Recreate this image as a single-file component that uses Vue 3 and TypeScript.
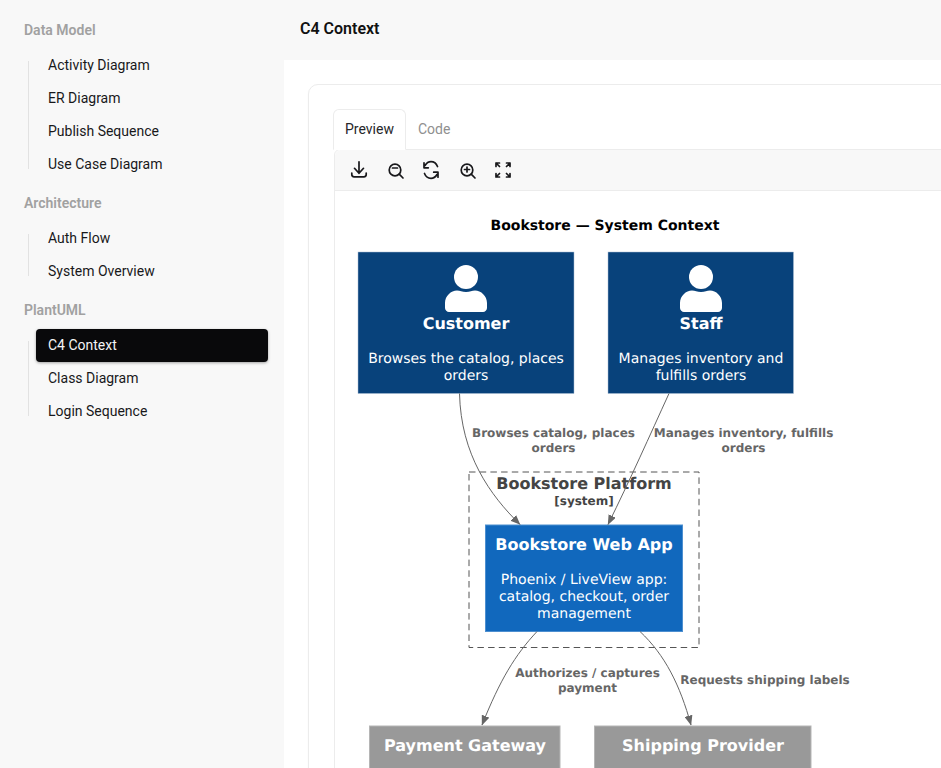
<script setup lang="ts">
interface NavGroup {
  title: string;
  items: string[];
}

const groups: NavGroup[] = [
  { title: 'Data Model', items: ['Activity Diagram', 'ER Diagram', 'Publish Sequence', 'Use Case Diagram'] },
  { title: 'Architecture', items: ['Auth Flow', 'System Overview'] },
  { title: 'PlantUML', items: ['C4 Context', 'Class Diagram', 'Login Sequence'] },
];

const active = 'C4 Context';
</script>

<template>
  <div class="page">
    <aside class="sidebar">
      <section v-for="group in groups" :key="group.title" class="group">
        <h4 class="group-title">{{ group.title }}</h4>
        <ul class="nav">
          <li v-for="item in group.items" :key="item" :class="{ active: item === active }">{{ item }}</li>
        </ul>
      </section>
    </aside>

    <main class="main">
      <header class="topbar">C4 Context</header>
      <div class="content">
        <div class="card">
          <div class="tabs">
            <span class="tab selected">Preview</span>
            <span class="tab">Code</span>
          </div>
          <div class="viewer">
            <div class="toolbar">
              <svg class="tool" viewBox="0 0 20 20"><path d="M10 1.800v11.500M5.500 8.300 10 13.300l4.500-5M2.800 13v1.500c0 1.300 1 2.300 2.300 2.300h9.800c1.300 0 2.300-1 2.300-2.300V13" /></svg>
              <svg class="tool" viewBox="0 0 20 20"><circle cx="10" cy="10" r="5.800" /><path d="M14.200 14.200 18 18M7.500 8h5" /></svg>
              <svg class="tool" viewBox="0 0 20 20"><path d="M16.500 6.500C15.300 3.500 12.800 1.600 10 1.600 7.600 1.600 5.500 3 4 5.500M3 2.800v5h4.300M3.500 13.500C4.700 16.500 7.200 18.400 10 18.400c2.400 0 4.500-1.400 6-3.900M17 17.200v-5h-4.300" /></svg>
              <svg class="tool" viewBox="0 0 20 20"><circle cx="10" cy="10" r="5.800" /><path d="M14.200 14.200 18 18M7.500 9.500h5M10 7v5" /></svg>
              <svg class="tool" viewBox="0 0 20 20"><path d="M3 6.500V3h3.500M3 3l3.500 3.500M13.500 3H17v3.500M17 3l-3.500 3.500M3 13.500V17h3.500M3 17l3.500-3.500M17 13.500V17h-3.500M17 17l-3.500-3.500" /></svg>
            </div>
            <svg class="diagram" viewBox="335 191 606 577" width="606" height="577">
              <defs>
                <marker id="arrow" markerWidth="10" markerHeight="8" refX="9.500" refY="4" orient="auto" markerUnits="userSpaceOnUse">
                  <path d="M0 0 10 4 0 8z" fill="#666" />
                </marker>
              </defs>

              <text class="title" x="605" y="230">Bookstore — System Context</text>

              <rect class="person" x="358" y="252" width="216" height="141.500" />
              <circle class="head" cx="466" cy="277" r="12" />
              <path class="head" d="M445 308v-5c0-7 6-12.500 12-12.500 3 0 5 1.500 9 1.500s6-1.500 9-1.500c6 0 12 5.500 12 12.500v5c0 2-2 4-4 4h-34c-2 0-4-2-4-4z" />
              <text class="name" x="466" y="328.500">Customer</text>
              <text class="desc" x="466" y="363">Browses the catalog, places</text>
              <text class="desc" x="466" y="380">orders</text>

              <rect class="person" x="608" y="252" width="185.500" height="141.500" />
              <circle class="head" cx="701" cy="277" r="12" />
              <path class="head" d="M680 308v-5c0-7 6-12.500 12-12.500 3 0 5 1.500 9 1.500s6-1.500 9-1.500c6 0 12 5.500 12 12.500v5c0 2-2 4-4 4h-34c-2 0-4-2-4-4z" />
              <text class="name" x="701" y="328.500">Staff</text>
              <text class="desc" x="701" y="363">Manages inventory and</text>
              <text class="desc" x="701" y="380">fulfills orders</text>

              <rect class="boundary" x="469" y="472" width="230" height="175.500" />
              <text class="boundary-name" x="584" y="489">Bookstore Platform</text>
              <text class="boundary-type" x="584" y="505">[system]</text>

              <rect class="app" x="485.500" y="525" width="197" height="106.500" />
              <text class="name" x="584" y="549.500">Bookstore Web App</text>
              <text class="desc" x="584" y="584">Phoenix / LiveView app:</text>
              <text class="desc" x="584" y="601">catalog, checkout, order</text>
              <text class="desc" x="584" y="618">management</text>

              <rect class="external" x="369.500" y="726" width="190.500" height="60" />
              <text class="name" x="465" y="750.500">Payment Gateway</text>
              <rect class="external" x="594.500" y="726" width="216.500" height="60" />
              <text class="name" x="703" y="750.500">Shipping Provider</text>

              <path class="edge" d="M459.500 393.500C461 455 490 495 520 524.500" marker-end="url(#arrow)" />
              <path class="edge" d="M669 393.500C650 435 630 480 608 524.500" marker-end="url(#arrow)" />
              <path class="edge" d="M537 631.500C515 655 500 680 482 725" marker-end="url(#arrow)" />
              <path class="edge" d="M640 631.500C665 655 680 685 691 725" marker-end="url(#arrow)" />

              <text class="label" x="553.500" y="437">Browses catalog, places</text>
              <text class="label" x="553.500" y="452">orders</text>
              <text class="label" x="743.500" y="437">Manages inventory, fulfills</text>
              <text class="label" x="743.500" y="452">orders</text>
              <text class="label" x="587.500" y="677">Authorizes / captures</text>
              <text class="label" x="587.500" y="692">payment</text>
              <text class="label" x="765" y="684">Requests shipping labels</text>
            </svg>
          </div>
        </div>
      </div>
    </main>
  </div>
</template>

<style>
html,
body {
  margin: 0;
  height: 100%;
  overflow: hidden;
}
</style>

<style scoped>
.page {
  display: flex;
  width: 941px;
  height: 768px;
  overflow: hidden;
  background: #f8f8f8;
  font-family: Roboto, sans-serif;
  font-size: 14px;
  color: #18181b;
}

.sidebar {
  flex: 0 0 284px;
  box-sizing: border-box;
  padding: 20px 16px 0 24px;
}

.group {
  margin-bottom: 12px;
}

.group-title {
  margin: 0 0 9px;
  height: 20px;
  font-size: 14px;
  line-height: 20px;
  font-weight: 600;
  color: #a1a1a1;
}

.nav {
  list-style: none;
  margin: 0 0 0 4px;
  padding: 0 0 0 8px;
  position: relative;
}

.nav::before {
  content: '';
  position: absolute;
  left: 0;
  top: 12px;
  bottom: 12px;
  width: 1px;
  background: #e2e2e2;
}

.nav li {
  height: 33px;
  line-height: 33px;
  padding-left: 12px;
}

.nav li.active {
  background: #09090b;
  color: #f4f4f5;
  border-radius: 4px;
  box-shadow: 0 1px 3px rgba(0, 0, 0, 0.35);
}

.main {
  flex: 1;
  min-width: 0;
  display: flex;
  flex-direction: column;
}

.topbar {
  flex: 0 0 60px;
  box-sizing: border-box;
  padding-left: 16px;
  line-height: 57px;
  font-size: 16px;
  font-weight: 600;
  color: #111;
}

.content {
  flex: 1;
  min-height: 0;
  background: #fff;
  padding: 24px 0 0 24px;
}

.card {
  box-sizing: border-box;
  width: 700px;
  height: 760px;
  padding: 24px 0 0 24px;
  background: #fff;
  border: 1px solid #ececec;
  border-radius: 10px;
  box-shadow: 0 1px 2px rgba(0, 0, 0, 0.04);
}

.tabs {
  display: flex;
  height: 41px;
  position: relative;
  z-index: 1;
}

.tab {
  box-sizing: border-box;
  padding: 0 11px;
  height: 41px;
  line-height: 39px;
  color: #8f8f8f;
  border: 1px solid transparent;
}

.tab.selected {
  color: #27272a;
  background: #fff;
  border-color: #ececec;
  border-bottom-color: #fff;
  border-radius: 6px 6px 0 0;
}

.viewer {
  margin-left: 1px;
  margin-top: -1px;
  border: 1px solid #ececec;
  border-radius: 6px 0 0 0;
}

.toolbar {
  display: flex;
  align-items: center;
  gap: 16px;
  height: 40px;
  padding-left: 14px;
  background: #f8f8f8;
  border-bottom: 1px solid #ececec;
  border-radius: 6px 0 0 0;
}

.tool {
  width: 20px;
  height: 20px;
  fill: none;
  stroke: #18181b;
  stroke-width: 1.700;
  stroke-linecap: round;
  stroke-linejoin: round;
}

.diagram {
  display: block;
  font-family: 'DejaVu Sans', sans-serif;
  text-anchor: middle;
  text-rendering: geometricPrecision;
}

.title {
  font-size: 14px;
  font-weight: 700;
  fill: #000;
}

.person {
  fill: #08427b;
  stroke: #a9bdd3;
  stroke-width: 0.500;
}

.app {
  fill: #1168bd;
  stroke: #4d8fd0;
  stroke-width: 1;
}

.external {
  fill: #999;
  stroke: #b5b5b5;
  stroke-width: 1;
}

.head {
  fill: #fff;
}

.name {
  font-size: 16px;
  font-weight: 700;
  fill: #fff;
}

.desc {
  font-size: 14px;
  fill: #fff;
}

.boundary {
  fill: none;
  stroke: #555;
  stroke-width: 1;
  stroke-dasharray: 6.500 4.200;
}

.boundary-name {
  font-size: 16px;
  font-weight: 700;
  fill: #444;
}

.boundary-type {
  font-size: 12px;
  font-weight: 700;
  fill: #444;
}

.edge {
  fill: none;
  stroke: #666;
  stroke-width: 1;
}

.label {
  font-size: 12px;
  font-weight: 700;
  fill: #666;
}
</style>
